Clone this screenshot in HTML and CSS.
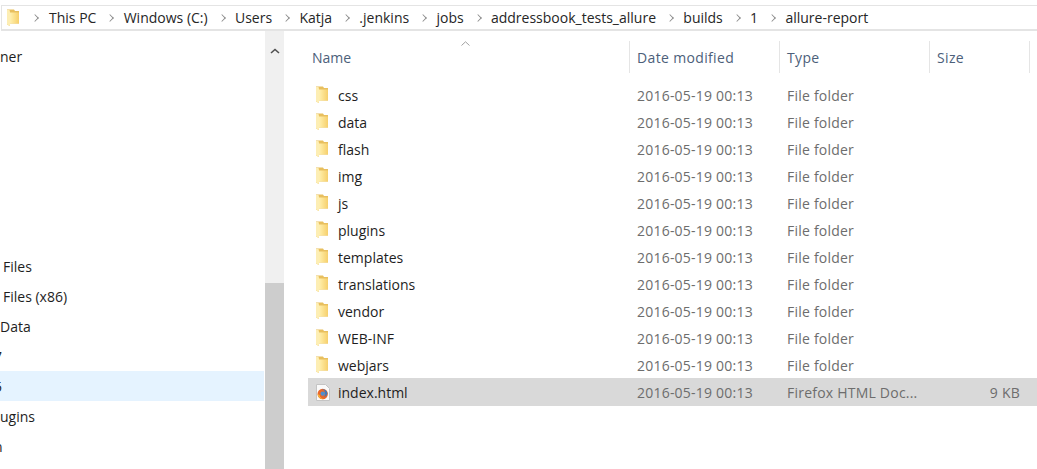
FILE: index.html
```html
<!DOCTYPE html>
<html lang="en">
<head>
    <meta charset="UTF-8">
    <title>allure-report</title>
    <link rel="stylesheet" href="styles.css">
</head>
<body>
    <svg class="defs" width="0" height="0">
        <defs>
            <linearGradient id="folderFill" x1="0" y1="0" x2="1" y2="0">
                <stop offset="0" stop-color="#fff0b0"/>
                <stop offset="0.5" stop-color="#fbe08c"/>
                <stop offset="1" stop-color="#f6cf6c"/>
            </linearGradient>
            <symbol id="folder" viewBox="0 0 12 17">
                <path d="M0 0.5H7L8 2H12V14.5H3V17L0 15.5Z" fill="#e8bf5e"/>
                <path d="M3 3.5H12V14.5H3Z" fill="url(#folderFill)"/>
                <path d="M0 1H2.5L3 3V17L0 15.5Z" fill="#fdeeb4"/>
            </symbol>
        </defs>
    </svg>

    <div class="address-bar">
        <svg class="folder-icon"><use href="#folder"/></svg>
        <span class="sep first"></span><span class="crumb">This PC</span>
        <span class="sep"></span><span class="crumb">Windows (C:)</span>
        <span class="sep"></span><span class="crumb">Users</span>
        <span class="sep"></span><span class="crumb">Katja</span>
        <span class="sep"></span><span class="crumb">.jenkins</span>
        <span class="sep"></span><span class="crumb">jobs</span>
        <span class="sep"></span><span class="crumb">addressbook_tests_allure</span>
        <span class="sep"></span><span class="crumb">builds</span>
        <span class="sep"></span><span class="crumb">1</span>
        <span class="sep"></span><span class="crumb">allure-report</span>
    </div>

    <div class="main">
        <nav class="tree">
            <div class="tree-item">ner</div>
            <div class="tree-gap"></div>
            <div class="tree-item files">Files</div>
            <div class="tree-item files">Files (x86)</div>
            <div class="tree-item">Data</div>
            <div class="tree-item cut">7</div>
            <div class="tree-item cut selected">5</div>
            <div class="tree-item">ugins</div>
            <div class="tree-item cut">n</div>
        </nav>
        <div class="scrollbar">
            <svg class="scroll-up" width="10" height="6" viewBox="0 0 10 6"><path d="M1 5L5 1.5L9 5" fill="none" stroke="#505050" stroke-width="1.6"/></svg>
            <div class="scroll-thumb"></div>
        </div>

        <section class="list">
            <div class="row head">
                <div class="col-name">Name
                    <svg class="sort-caret" width="9" height="5" viewBox="0 0 9 5"><path d="M0.5 4.5L4.5 0.8L8.5 4.5" fill="none" stroke="#a0a0a0"/></svg>
                </div>
                <div class="col">Date modified</div>
                <div class="col">Type</div>
                <div class="col">Size</div>
                <div class="col-end"></div>
            </div>
            <div class="files-list">
                <div class="row file"><svg class="folder-icon"><use href="#folder"/></svg><span class="name">css</span><span class="meta">2016-05-19 00:13</span><span class="meta">File folder</span></div>
                <div class="row file"><svg class="folder-icon"><use href="#folder"/></svg><span class="name">data</span><span class="meta">2016-05-19 00:13</span><span class="meta">File folder</span></div>
                <div class="row file"><svg class="folder-icon"><use href="#folder"/></svg><span class="name">flash</span><span class="meta">2016-05-19 00:13</span><span class="meta">File folder</span></div>
                <div class="row file"><svg class="folder-icon"><use href="#folder"/></svg><span class="name">img</span><span class="meta">2016-05-19 00:13</span><span class="meta">File folder</span></div>
                <div class="row file"><svg class="folder-icon"><use href="#folder"/></svg><span class="name">js</span><span class="meta">2016-05-19 00:13</span><span class="meta">File folder</span></div>
                <div class="row file"><svg class="folder-icon"><use href="#folder"/></svg><span class="name">plugins</span><span class="meta">2016-05-19 00:13</span><span class="meta">File folder</span></div>
                <div class="row file"><svg class="folder-icon"><use href="#folder"/></svg><span class="name">templates</span><span class="meta">2016-05-19 00:13</span><span class="meta">File folder</span></div>
                <div class="row file"><svg class="folder-icon"><use href="#folder"/></svg><span class="name">translations</span><span class="meta">2016-05-19 00:13</span><span class="meta">File folder</span></div>
                <div class="row file"><svg class="folder-icon"><use href="#folder"/></svg><span class="name">vendor</span><span class="meta">2016-05-19 00:13</span><span class="meta">File folder</span></div>
                <div class="row file"><svg class="folder-icon"><use href="#folder"/></svg><span class="name">WEB-INF</span><span class="meta">2016-05-19 00:13</span><span class="meta">File folder</span></div>
                <div class="row file"><svg class="folder-icon"><use href="#folder"/></svg><span class="name">webjars</span><span class="meta">2016-05-19 00:13</span><span class="meta">File folder</span></div>
                <div class="row file active">
                    <svg class="html-icon" viewBox="0 0 14 17">
                        <path d="M0.5 0.5H9.5L13.5 4.5V16.5H0.5Z" fill="#fafafa" stroke="#c4c4c4"/>
                        <circle cx="6.7" cy="10" r="5.2" fill="#e9682a"/>
                        <path d="M6 5.2A4.8 4.8 0 0 1 11.5 9.5A4.6 4.6 0 0 1 8 13A4 4 0 0 0 9 8.5A3.6 3.6 0 0 0 6 5.2Z" fill="#3f78b8"/>
                        <circle cx="6.8" cy="9.6" r="2.2" fill="#4f8fd0"/>
                        <path d="M1.6 10A5.2 5.2 0 0 0 8 15A5 5 0 0 1 3.5 11Z" fill="#f5b73a"/>
                    </svg>
                    <span class="name">index.html</span><span class="meta">2016-05-19 00:13</span><span class="meta">Firefox HTML Doc...</span><span class="meta size">9 KB</span>
                </div>
            </div>
        </section>
    </div>
</body>
</html>
```

FILE: styles.css
```css
* {
    box-sizing: border-box;
}
html, body {
    height: 100%;
}
body {
    margin: 0;
    background: #fff;
    overflow: hidden;
    font-family: "Open Sans", "Noto Sans", sans-serif;
    font-size: 14px;
    color: #1e1e1e;
    display: flex;
    flex-direction: column;
}
.defs {
    position: absolute;
}
.address-bar {
    margin: 5px 0 0 1px;
    height: 26px;
    flex: none;
    border: solid #e4e4e4;
    border-width: 1.5px 0 2px 1px;
    padding-left: 5px;
    display: flex;
    align-items: center;
    white-space: nowrap;
    color: #262626;
}
.folder-icon {
    width: 12px;
    height: 17px;
    flex: none;
}
.sep {
    width: 6px;
    height: 6px;
    margin: 0 10.3px 0 11px;
    border-top: 1.5px solid #8a8a8a;
    border-right: 1.5px solid #8a8a8a;
    transform: rotate(45deg) scale(0.9);
    flex: none;
}
.sep.first {
    margin: 0 11px 0 13px;
}
.main {
    flex: 1;
    display: flex;
    min-height: 0;
}
.tree {
    width: 265px;
    flex: none;
    padding-top: 11px;
    overflow: hidden;
}
.tree-item {
    height: 30px;
    line-height: 30px;
    margin-right: 1px;
}
.tree-gap {
    height: 180px;
}
.tree-item.selected {
    background: #e5f3ff;
    margin-top: -1px;
    margin-bottom: 1px;
    line-height: 32px;
}
.tree-item.files {
    padding-left: 3px;
}
.tree-item.cut {
    text-indent: -6px;
}
.scrollbar {
    width: 19px;
    flex: none;
    background: #f0f0f0;
    display: flex;
    flex-direction: column;
    align-items: center;
}
.scroll-up {
    margin-top: 17px;
    flex: none;
}
.scroll-thumb {
    margin-top: 229px;
    flex: 1;
    width: 100%;
    background: #cdcdcd;
}
.list {
    flex: 1;
    min-width: 0;
    padding: 10px 0 0 24px;
}
.row {
    display: flex;
    align-items: center;
}
.head {
    height: 32px;
    color: #4c607a;
}
.col-name {
    position: relative;
    width: 321px;
    height: 100%;
    padding-left: 4px;
    line-height: 34px;
    flex: none;
}
.col, .col-end {
    width: 150px;
    height: 100%;
    line-height: 34px;
    padding-left: 7px;
    letter-spacing: 0.35px;
    border-left: 1px solid #e5e5e5;
    flex: none;
}
.col:nth-child(4) {
    width: 100px;
}
.col-end {
    width: 8px;
}
.sort-caret {
    position: absolute;
    left: 153px;
    top: 0;
}
.files-list {
    margin-top: 8px;
}
.file {
    height: 27px;
    padding-left: 8px;
}
.file .folder-icon, .html-icon {
    width: 12px;
    height: 17px;
    flex: none;
    margin-right: 10px;
}
.html-icon {
    width: 14px;
    margin-right: 8px;
}
.name {
    width: 299px;
    flex: none;
    padding-top: 2px;
    color: #1e1e1e;
}
.meta {
    width: 150px;
    flex: none;
    padding-top: 2px;
    color: #6d6d6d;
    letter-spacing: 0.22px;
    white-space: nowrap;
}
.meta.size {
    width: 83px;
    text-align: right;
}
.active {
    height: 28px;
    background: #d9d9d9;
}
.active .name, .active .meta {
    padding-top: 0;
}
```
